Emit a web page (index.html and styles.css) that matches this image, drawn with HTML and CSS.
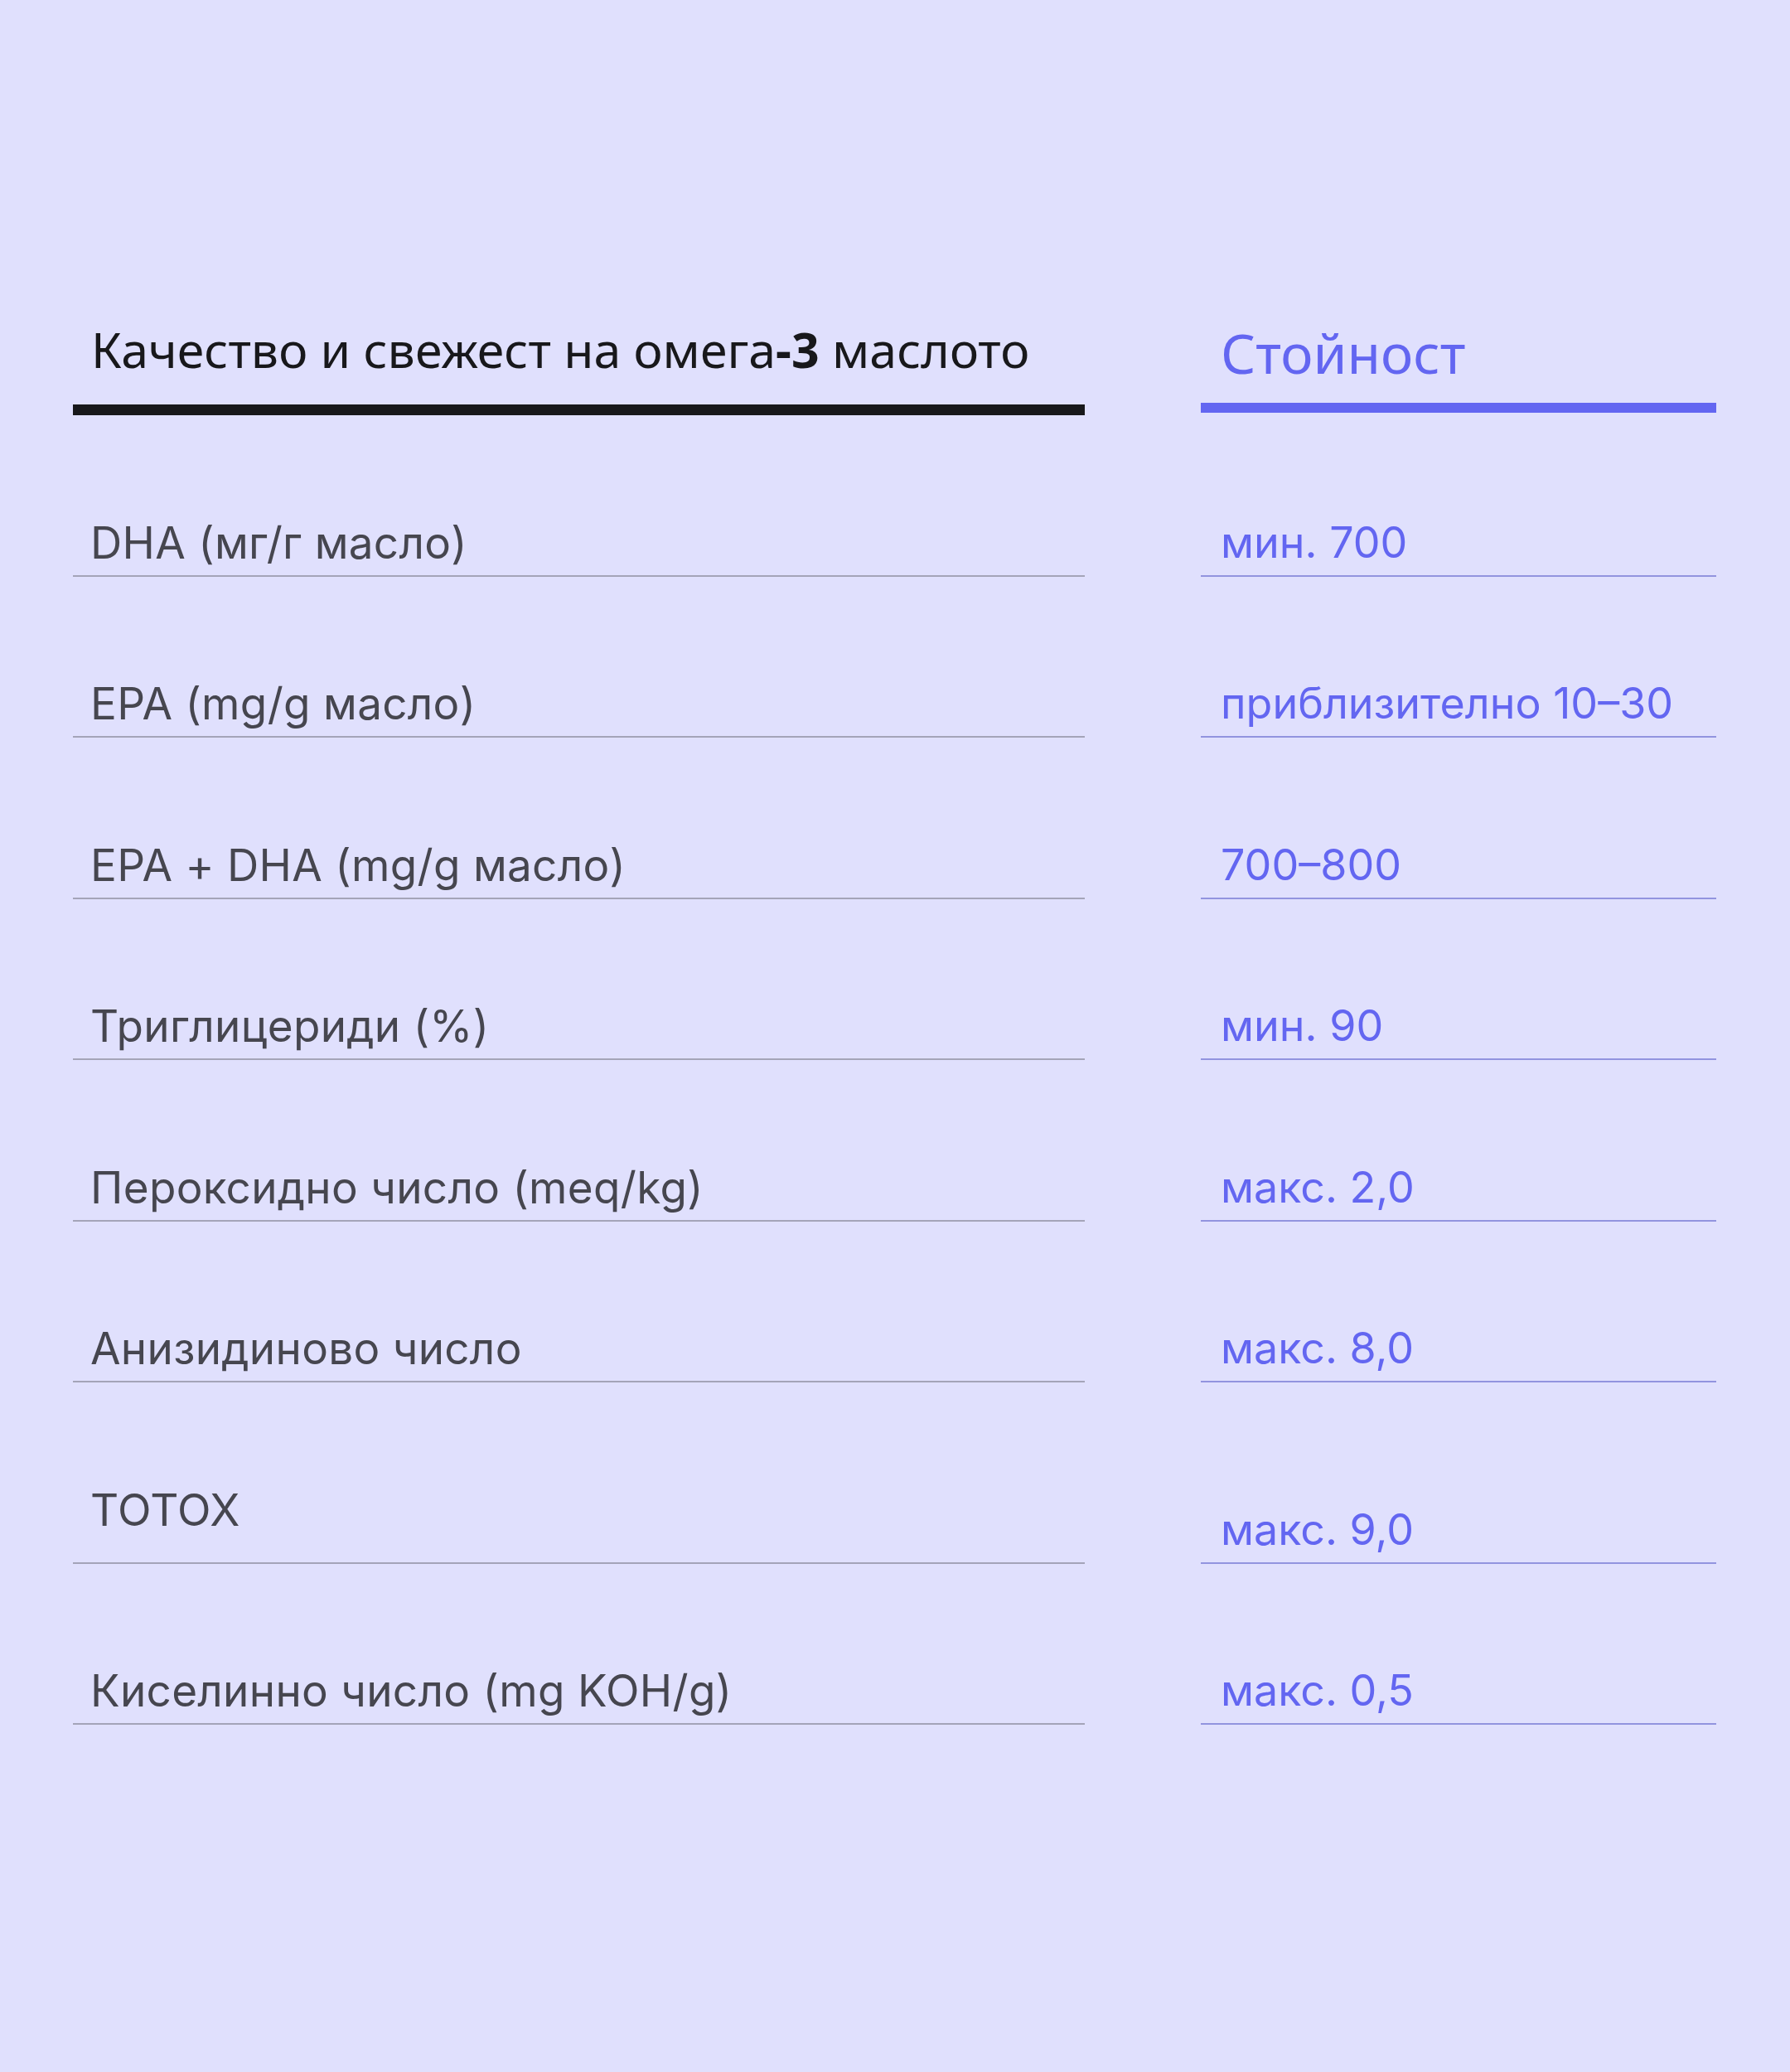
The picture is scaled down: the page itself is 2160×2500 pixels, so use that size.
FILE: index.html
```html
<!DOCTYPE html>
<html lang="bg">
<head>
<meta charset="utf-8">
<title>Качество и свежест на омега-3 маслото</title>
<link rel="stylesheet" href="styles.css">
</head>
<body>
<main class="page">
  <section class="spec">
    <div class="spec-head">
      <div class="head-cell head-cell--param">Качество и свежест на омега<strong>-3</strong> маслото</div>
      <div class="head-cell head-cell--value">Стойност</div>
    </div>
    <div class="spec-row">
      <div class="cell cell--label">DHA (мг/г масло)</div>
      <div class="cell cell--value">мин. 700</div>
    </div>
    <div class="spec-row">
      <div class="cell cell--label">EPA (mg/g масло)</div>
      <div class="cell cell--value">приблизително 10–30</div>
    </div>
    <div class="spec-row">
      <div class="cell cell--label">EPA + DHA (mg/g масло)</div>
      <div class="cell cell--value">700–800</div>
    </div>
    <div class="spec-row">
      <div class="cell cell--label">Триглицериди (%)</div>
      <div class="cell cell--value">мин. 90</div>
    </div>
    <div class="spec-row">
      <div class="cell cell--label">Пероксидно число (meq/kg)</div>
      <div class="cell cell--value">макс. 2,0</div>
    </div>
    <div class="spec-row">
      <div class="cell cell--label">Анизидиново число</div>
      <div class="cell cell--value">макс. 8,0</div>
    </div>
    <div class="spec-row spec-row--tall">
      <div class="cell cell--label">TOTOX</div>
      <div class="cell cell--value">макс. 9,0</div>
    </div>
    <div class="spec-row">
      <div class="cell cell--label">Киселинно число (mg KOH/g)</div>
      <div class="cell cell--value">макс. 0,5</div>
    </div>
  </section>
</main>
</body>
</html>
```
FILE: styles.css
```css
html {
  background: #e0e0fd;
}

body {
  margin: 0;
  background: #e0e0fd;
}

.page {
  padding: 386px 88px 200px;
}

.spec-head,
.spec-row {
  display: grid;
  grid-template-columns: 1221px 622px;
  column-gap: 140px;
}

.spec-head {
  align-items: start;
}

.head-cell {
  font-family: "Noto Sans", "Open Sans", sans-serif;
}

.head-cell--param {
  font-size: 59px;
  line-height: 70px;
  color: #18181b;
  padding-left: 22px;
  padding-bottom: 32px;
  border-bottom: 13px solid #18181b;
}

.head-cell--param strong {
  font-weight: 700;
}

.head-cell--value {
  font-size: 66px;
  line-height: 79px;
  color: #6366f1;
  padding-left: 24px;
  padding-bottom: 21px;
  border-bottom: 12px solid #6366f1;
}

.cell {
  font-family: Inter, "Noto Sans", sans-serif;
  font-size: 52px;
  line-height: 62px;
  padding: 122.5px 24px 8px;
  border-bottom: 2px solid;
}

.cell--label {
  font-size: 53px;
  letter-spacing: 0.3px;
  padding-left: 21px;
  color: #46464f;
  border-bottom-color: #a4a4b8;
}

.cell--value {
  color: #6366f1;
  border-bottom-color: #9294df;
}

.spec-row--tall .cell--label {
  padding-bottom: 32px;
}

.spec-row--tall .cell--value {
  display: flex;
  align-items: flex-end;
}
```
